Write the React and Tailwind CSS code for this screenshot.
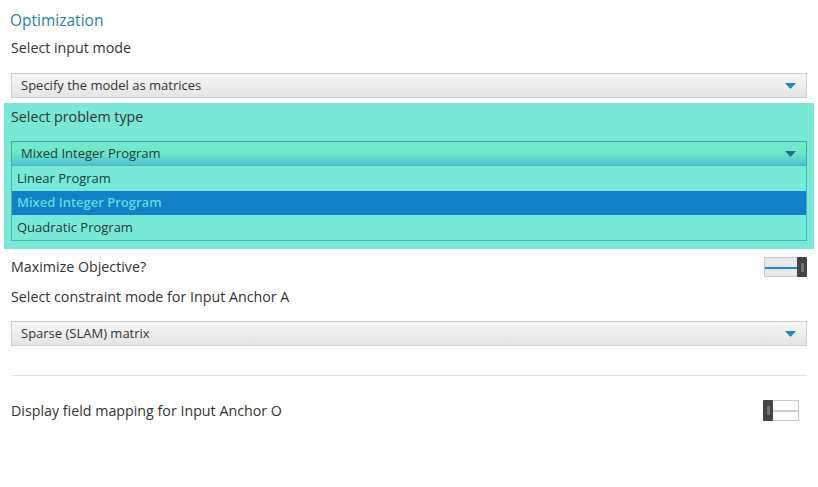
import React from 'react';

const font = { fontFamily: '"Open Sans", "Noto Sans", sans-serif' };

const Arrow = ({ color = '#1a8ac8' }) => (
  <svg width="11" height="6" viewBox="0 0 11 6" className="block">
    <path d="M0 0 H11 L5.5 6 Z" fill={color} />
  </svg>
);

const Select = ({ value }) => (
  <div className="h-[25px] border border-[#cfcfcf] bg-gradient-to-b from-[#f7f7f7] to-[#e4e4e4] flex items-center justify-between pl-[9px] pr-[10px]">
    <span className="text-[13px] text-[#333]">{value}</span>
    <Arrow />
  </div>
);

const Label = ({ children, className = '' }) => (
  <div className={`text-[14.25px] text-[#333] leading-[20px] ${className}`}>{children}</div>
);

const ToggleOn = () => (
  <div className="relative w-[43px] h-[20px]">
    <div className="absolute left-0 top-0 w-[35px] h-[20px] bg-[#e8e8e8] border border-[#c8c8c8]">
      <div className="absolute left-0 right-0 top-[9px] h-[2px] bg-[#1a8ac8]" />
    </div>
    <div className="absolute right-0 top-0 w-[10px] h-[20px] bg-[#444] rounded-[1px] flex items-center justify-center">
      <div className="w-[3px] h-[9px] bg-[#777] rounded-[1px]" />
    </div>
  </div>
);

const ToggleOff = () => (
  <div className="relative w-[36px] h-[21px]">
    <div className="absolute left-0 top-0 w-[36px] h-[21px] bg-white border border-[#c8c8c8]">
      <div className="absolute left-0 right-0 top-[9px] h-[2px] bg-[#cfcfcf]" />
    </div>
    <div className="absolute left-0 top-0 w-[10px] h-[21px] bg-[#444] rounded-[1px] flex items-center justify-center">
      <div className="w-[3px] h-[9px] bg-[#777] rounded-[1px]" />
    </div>
  </div>
);

export default function App() {
  return (
    <div className="w-[818px] h-[487px] bg-white overflow-hidden" style={font}>
      <div className="px-[11px] pt-[10px]">
        <div className="text-[15.5px] text-[#2a7fa6] leading-[20px] -ml-[1px]">Optimization</div>
        <Label className="mt-[8px]">Select input mode</Label>
        <div className="mt-[15px]">
          <Select value="Specify the model as matrices" />
        </div>

        <div className="mt-[5px] -mx-[7px] px-[7px] bg-[#78e9d6] pt-[4px] pb-[8px]">
          <Label>Select problem type</Label>
          <div className="mt-[14px]">
            <div className="h-[24px] border border-[#3bb0a8] border-b-0 bg-gradient-to-b from-[#72ecc8] via-[#6ee6c4] to-[#4fc0d4] flex items-center justify-between pl-[9px] pr-[10px]">
              <span className="text-[13px] text-[#1f3a38] leading-[18px] self-start mt-[2px]">Mixed Integer Program</span>
              <Arrow color="#1f6e8a" />
            </div>
            <div className="border border-[#45b9ae] text-[13px]">
              <div className="h-[25px] flex items-center pl-[5px] text-[#1f3a38]">Linear Program</div>
              <div className="h-[24px] flex items-center pl-[5px] bg-[#1180c8] text-[#5fdcdc] font-semibold">Mixed Integer Program</div>
              <div className="h-[25px] flex items-center pl-[5px] text-[#1f3a38]">Quadratic Program</div>
            </div>
          </div>
        </div>

        <div className="mt-[8px] flex items-center justify-between">
          <Label>Maximize Objective?</Label>
          <ToggleOn />
        </div>
        <Label className="mt-[10px]">Select constraint mode for Input Anchor A</Label>
        <div className="mt-[14px]">
          <Select value="Sparse (SLAM) matrix" />
        </div>
        <div className="mt-[29px] h-px bg-[#e2e2e2]" />
        <div className="mt-[24px] flex items-center justify-between pr-[8px]">
          <Label>Display field mapping for Input Anchor O</Label>
          <ToggleOff />
        </div>
      </div>
    </div>
  );
}
